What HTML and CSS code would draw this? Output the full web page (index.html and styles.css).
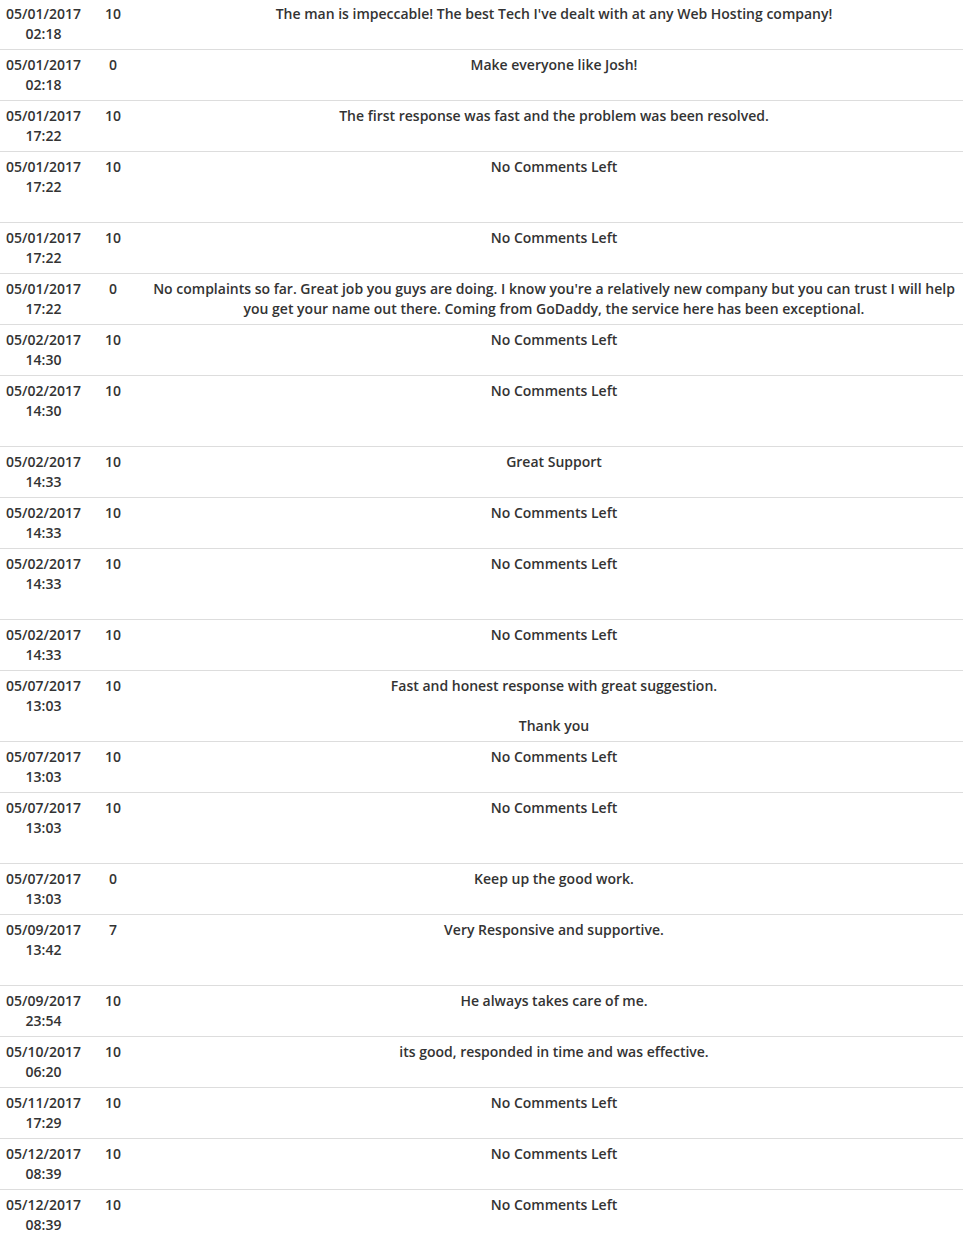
FILE: index.html
```html
<!DOCTYPE html>
<html lang="en">
  <head>
    <meta charset="UTF-8" />
    <meta name="viewport" content="width=device-width, initial-scale=1.0" />
    <title>Feedback</title>
    <link rel="stylesheet" href="styles.css">
  </head>
  <body>
    <table class="feedback">
      <tbody>
        <tr>
          <td class="date">05/01/2017<br />02:18</td>
          <td class="score">10</td>
          <td class="comment">The man is impeccable! The best Tech I've dealt with at any Web Hosting company!</td>
        </tr>
        <tr>
          <td class="date">05/01/2017<br />02:18</td>
          <td class="score">0</td>
          <td class="comment">Make everyone like Josh!</td>
        </tr>
        <tr>
          <td class="date">05/01/2017<br />17:22</td>
          <td class="score">10</td>
          <td class="comment">The first response was fast and the problem was been resolved.</td>
        </tr>
        <tr class="tall">
          <td class="date">05/01/2017<br />17:22</td>
          <td class="score">10</td>
          <td class="comment">No Comments Left</td>
        </tr>
        <tr>
          <td class="date">05/01/2017<br />17:22</td>
          <td class="score">10</td>
          <td class="comment">No Comments Left</td>
        </tr>
        <tr>
          <td class="date">05/01/2017<br />17:22</td>
          <td class="score">0</td>
          <td class="comment">No complaints so far. Great job you guys are doing. I know you're a relatively new company but you can trust I will help you get your name out there. Coming from GoDaddy, the service here has been exceptional.</td>
        </tr>
        <tr>
          <td class="date">05/02/2017<br />14:30</td>
          <td class="score">10</td>
          <td class="comment">No Comments Left</td>
        </tr>
        <tr class="tall">
          <td class="date">05/02/2017<br />14:30</td>
          <td class="score">10</td>
          <td class="comment">No Comments Left</td>
        </tr>
        <tr>
          <td class="date">05/02/2017<br />14:33</td>
          <td class="score">10</td>
          <td class="comment">Great Support</td>
        </tr>
        <tr>
          <td class="date">05/02/2017<br />14:33</td>
          <td class="score">10</td>
          <td class="comment">No Comments Left</td>
        </tr>
        <tr class="tall">
          <td class="date">05/02/2017<br />14:33</td>
          <td class="score">10</td>
          <td class="comment">No Comments Left</td>
        </tr>
        <tr>
          <td class="date">05/02/2017<br />14:33</td>
          <td class="score">10</td>
          <td class="comment">No Comments Left</td>
        </tr>
        <tr>
          <td class="date">05/07/2017<br />13:03</td>
          <td class="score">10</td>
          <td class="comment">Fast and honest response with great suggestion.<br /><br />Thank you</td>
        </tr>
        <tr>
          <td class="date">05/07/2017<br />13:03</td>
          <td class="score">10</td>
          <td class="comment">No Comments Left</td>
        </tr>
        <tr class="tall">
          <td class="date">05/07/2017<br />13:03</td>
          <td class="score">10</td>
          <td class="comment">No Comments Left</td>
        </tr>
        <tr>
          <td class="date">05/07/2017<br />13:03</td>
          <td class="score">0</td>
          <td class="comment">Keep up the good work.</td>
        </tr>
        <tr class="tall">
          <td class="date">05/09/2017<br />13:42</td>
          <td class="score">7</td>
          <td class="comment">Very Responsive and supportive.</td>
        </tr>
        <tr>
          <td class="date">05/09/2017<br />23:54</td>
          <td class="score">10</td>
          <td class="comment">He always takes care of me.</td>
        </tr>
        <tr>
          <td class="date">05/10/2017<br />06:20</td>
          <td class="score">10</td>
          <td class="comment">its good, responded in time and was effective.</td>
        </tr>
        <tr>
          <td class="date">05/11/2017<br />17:29</td>
          <td class="score">10</td>
          <td class="comment">No Comments Left</td>
        </tr>
        <tr>
          <td class="date">05/12/2017<br />08:39</td>
          <td class="score">10</td>
          <td class="comment">No Comments Left</td>
        </tr>
        <tr>
          <td class="date">05/12/2017<br />08:39</td>
          <td class="score">10</td>
          <td class="comment">No Comments Left</td>
        </tr>
      </tbody>
    </table>
  </body>
</html>
```

FILE: styles.css
```css
* {
  box-sizing: border-box;
  margin: 0;
  padding: 0;
}

body {
  font-family: "Open Sans", "Liberation Sans", sans-serif;
  font-size: 14px;
  font-weight: 600;
  line-height: 20px;
  color: #333333;
  background-color: #ffffff;
}

.feedback {
  width: 100%;
  margin-top: -1px;
  border-collapse: collapse;
  table-layout: fixed;
}

.feedback td {
  padding: 5px 6px;
  vertical-align: top;
  text-align: center;
  border-bottom: 1px solid #dddddd;
}

.feedback td.date {
  width: 87px;
}

.feedback td.score {
  width: 52px;
}

.feedback td.comment {
  padding-left: 12px;
  padding-right: 6px;
}

.feedback tr.tall td.date {
  padding-bottom: 25px;
}
```
